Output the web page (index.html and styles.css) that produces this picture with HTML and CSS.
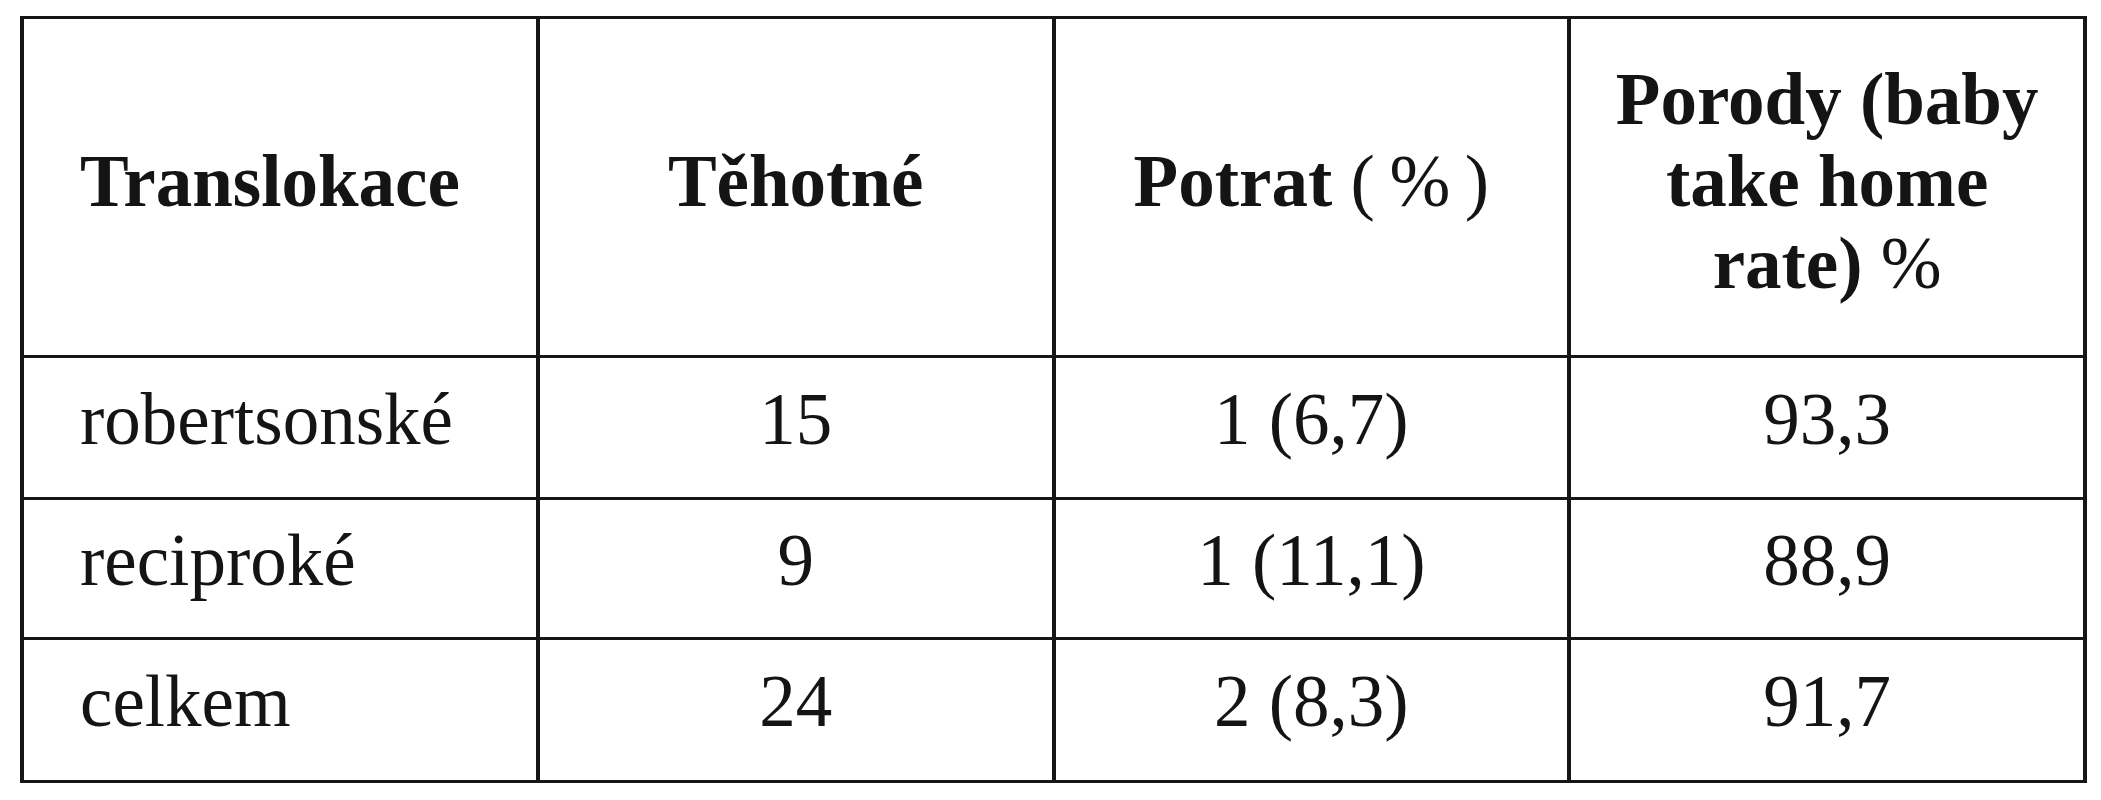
FILE: index.html
```html
<!DOCTYPE html>
<html lang="cs">
<head>
<meta charset="utf-8">
<title>Translokace</title>
<link rel="stylesheet" href="styles.css">
</head>
<body>
<table class="data">
  <colgroup>
    <col class="c1"><col class="c2"><col class="c3"><col class="c4">
  </colgroup>
  <thead>
    <tr class="head">
      <th class="left">Translokace</th>
      <th>Těhotné</th>
      <th>Potrat <span class="reg">(&thinsp;%&thinsp;)</span></th>
      <th>Porody (baby<br>take home<br>rate) <span class="reg">%</span></th>
    </tr>
  </thead>
  <tbody>
    <tr class="r1">
      <td class="left">robertsonské</td>
      <td>15</td>
      <td>1 (6,7)</td>
      <td>93,3</td>
    </tr>
    <tr class="r2">
      <td class="left">reciproké</td>
      <td>9</td>
      <td>1 (11,1)</td>
      <td>88,9</td>
    </tr>
    <tr class="r3">
      <td class="left">celkem</td>
      <td>24</td>
      <td>2 (8,3)</td>
      <td>91,7</td>
    </tr>
  </tbody>
</table>
</body>
</html>
```
FILE: styles.css
```css
html, body {
  margin: 0;
  padding: 0;
  background: #ffffff;
}

body {
  padding: 16px 0 0 20px;
}

.data {
  border-collapse: collapse;
  table-layout: fixed;
  width: 2067px;
  font-family: "Liberation Serif", "Times New Roman", serif;
  font-size: 73px;
  line-height: 82px;
  color: #141414;
}

.data th,
.data td {
  border-style: solid;
  border-color: #161616;
  border-width: 3px 4px;
  text-align: center;
  vertical-align: middle;
  padding: 0 10px;
  white-space: nowrap;
}

.data th {
  font-weight: bold;
  padding-bottom: 10px;
}

.data td {
  font-weight: normal;
  padding-bottom: 16px;
}

.data .left {
  text-align: left;
  padding-left: 56px;
}

.reg {
  font-weight: normal;
}

.head {
  height: 339px;
}

.r1 {
  height: 142px;
}

.r2 {
  height: 140px;
}

.r3 {
  height: 143px;
}
```
